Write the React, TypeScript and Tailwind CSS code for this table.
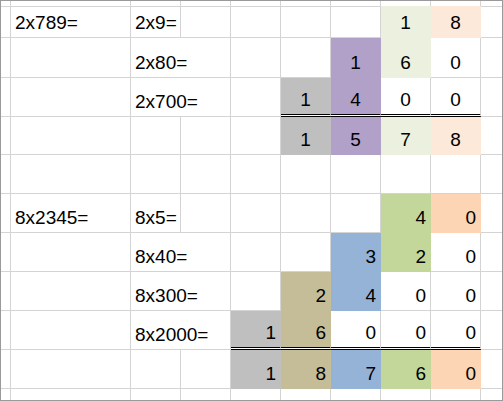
import React from "react";

type Fill = "lg" | "lo" | "pu" | "gy" | "gr" | "or" | "bl" | "tn";

interface Cell {
  t?: string;
  a?: "l" | "c" | "r";
  f?: Fill;
  d?: boolean; // double bottom border
  nr?: boolean; // text spills over, so no right gridline
}

// fill colour covers the cell's own gridlines, like Excel does
const fillBg: Record<Fill, string> = {
  lg: "bg-[#ebf1de]",
  lo: "bg-[#fde9d9]",
  pu: "bg-[#b1a0c7]",
  gy: "bg-[#bfbfbf]",
  gr: "bg-[#c4d79b]",
  or: "bg-[#fcd5b4]",
  bl: "bg-[#95b3d7]",
  tn: "bg-[#c4bd97]",
};
const fillR: Record<Fill, string> = {
  lg: "border-r-[#ebf1de]",
  lo: "border-r-[#fde9d9]",
  pu: "border-r-[#b1a0c7]",
  gy: "border-r-[#bfbfbf]",
  gr: "border-r-[#c4d79b]",
  or: "border-r-[#fcd5b4]",
  bl: "border-r-[#95b3d7]",
  tn: "border-r-[#c4bd97]",
};
const fillB: Record<Fill, string> = {
  lg: "border-b-[#ebf1de]",
  lo: "border-b-[#fde9d9]",
  pu: "border-b-[#b1a0c7]",
  gy: "border-b-[#bfbfbf]",
  gr: "border-b-[#c4d79b]",
  or: "border-b-[#fcd5b4]",
  bl: "border-b-[#95b3d7]",
  tn: "border-b-[#c4bd97]",
};

const COLS = 10;

// columns: 0 stub, 1 A, 2 B, 3 C, 4 D, 5 E, 6 F, 7 G, 8 H, 9 I
const sheet: Record<number, Cell>[] = [
  {},
  {
    1: { t: "2x789=" },
    2: { t: "2x9=" },
    7: { t: "1", a: "c", f: "lg" },
    8: { t: "8", a: "c", f: "lo" },
  },
  {
    2: { t: "2x80=", nr: true },
    6: { t: "1", a: "c", f: "pu" },
    7: { t: "6", a: "c", f: "lg" },
    8: { t: "0", a: "c" },
  },
  {
    2: { t: "2x700=", nr: true },
    5: { t: "1", a: "c", f: "gy", d: true },
    6: { t: "4", a: "c", f: "pu", d: true },
    7: { t: "0", a: "c", d: true },
    8: { t: "0", a: "c", d: true },
  },
  {
    5: { t: "1", a: "c", f: "gy" },
    6: { t: "5", a: "c", f: "pu" },
    7: { t: "7", a: "c", f: "lg" },
    8: { t: "8", a: "c", f: "lo" },
  },
  {},
  {
    1: { t: "8x2345=" },
    2: { t: "8x5=" },
    7: { t: "4", a: "r", f: "gr" },
    8: { t: "0", a: "r", f: "or" },
  },
  {
    2: { t: "8x40=", nr: true },
    6: { t: "3", a: "r", f: "bl" },
    7: { t: "2", a: "r", f: "gr" },
    8: { t: "0", a: "r" },
  },
  {
    2: { t: "8x300=", nr: true },
    5: { t: "2", a: "r", f: "tn" },
    6: { t: "4", a: "r", f: "bl" },
    7: { t: "0", a: "r" },
    8: { t: "0", a: "r" },
  },
  {
    2: { t: "8x2000=", nr: true },
    4: { t: "1", a: "r", f: "gy", d: true },
    5: { t: "6", a: "r", f: "tn", d: true },
    6: { t: "0", a: "r", d: true },
    7: { t: "0", a: "r", d: true },
    8: { t: "0", a: "r", d: true },
  },
  {
    4: { t: "1", a: "r", f: "gy" },
    5: { t: "8", a: "r", f: "tn" },
    6: { t: "7", a: "r", f: "bl" },
    7: { t: "6", a: "r", f: "gr" },
    8: { t: "0", a: "r", f: "or" },
  },
  {},
];

const SheetCell: React.FC<{ cell: Cell; row: number; col: number }> = ({ cell, row, col }) => {
  const lastCol = col === COLS - 1;
  const lastRow = row === sheet.length - 1;

  const right = lastCol || cell.nr ? "" : `border-r ${cell.f ? fillR[cell.f] : "border-r-[#d4d4d4]"}`;
  let bottom = "";
  if (cell.d) bottom = "border-b-[3px] border-double border-b-black bg-clip-padding";
  else if (!lastRow) bottom = `border-b ${cell.f ? fillB[cell.f] : "border-b-[#d4d4d4]"}`;

  const align =
    cell.a === "c" ? "justify-center" : cell.a === "r" ? "justify-end pr-[4px]" : "justify-start pl-[4px]";

  return (
    <div
      className={`flex items-end pb-[5px] whitespace-nowrap min-w-0 ${align} ${right} ${bottom} ${
        cell.f ? fillBg[cell.f] : ""
      }`}
    >
      {cell.t && <span>{cell.t}</span>}
    </div>
  );
};

export default function App() {
  return (
    <div className="w-[503px] h-[401px] bg-white border border-[#9a9a9a] overflow-hidden">
      <div className="grid grid-cols-[10px_120px_50px_50px_50px_50px_50px_50px_50px_21px] grid-rows-[5px_32px_40px_39px_38px_39px_39px_39px_39px_39px_39px_11px] text-[19px] leading-[19px] text-black font-['Liberation_Sans',Arial,sans-serif]">
        {sheet.map((row, r) =>
          Array.from({ length: COLS }, (_, c) => (
            <SheetCell key={`${r}-${c}`} cell={row[c] ?? {}} row={r} col={c} />
          ))
        )}
      </div>
    </div>
  );
}
